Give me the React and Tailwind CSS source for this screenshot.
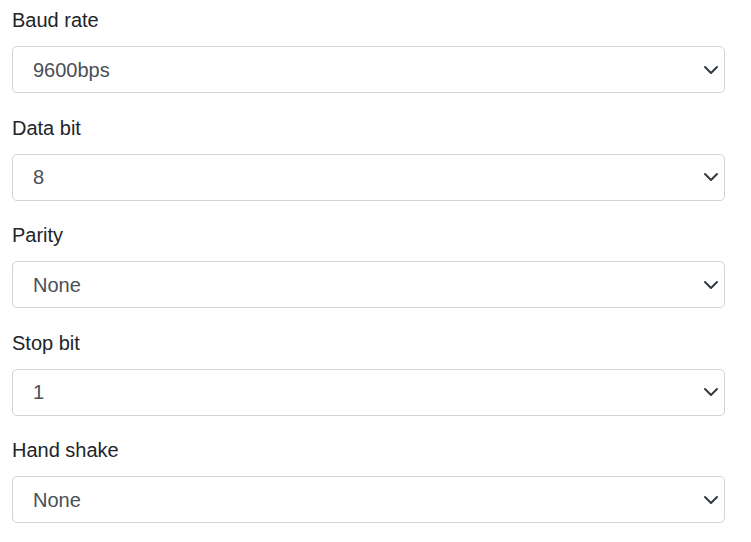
import React from 'react';

const fields = [
  { label: 'Baud rate', value: '9600bps' },
  { label: 'Data bit', value: '8' },
  { label: 'Parity', value: 'None' },
  { label: 'Stop bit', value: '1' },
  { label: 'Hand shake', value: 'None' },
];

const Chevron = () => (
  <svg width="16" height="16" viewBox="0 0 16 16" fill="none" stroke="#343a40" strokeWidth="2" strokeLinecap="round" strokeLinejoin="round">
    <path d="M2 5l6 6 6-6" />
  </svg>
);

export default function App() {
  return (
    <div className="w-[751px] h-[542px] bg-white pl-3 pr-[26px] font-['Liberation_Sans',Arial,sans-serif] overflow-hidden">
      {fields.map((f) => (
        <div key={f.label} className="mb-[14.5px]">
          <div className="h-10 flex items-center text-[20px] text-[#212529]">{f.label}</div>
          <div className="mt-1.5 h-[47px] border border-[#ced4da] rounded-[5px] flex items-center justify-between pl-5 pr-[5px] text-[20px] text-[#495057]">
            <span>{f.value}</span>
            <Chevron />
          </div>
        </div>
      ))}
    </div>
  );
}
